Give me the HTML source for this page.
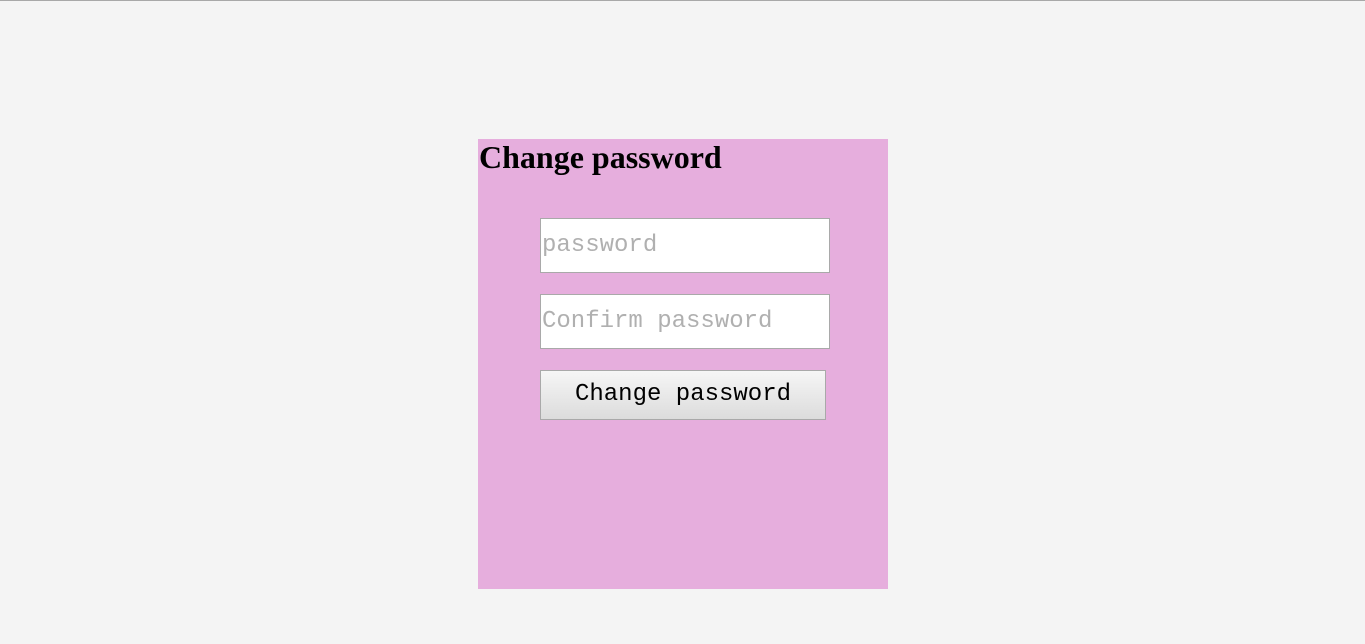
<!DOCTYPE html>
<html><head><style>
html,body{margin:0;padding:0;background:#f4f4f4;width:1365px;height:644px;overflow:hidden;}
.top{position:absolute;left:0;top:0;width:1365px;height:1px;background:#a8a8a8;}
.box{position:absolute;left:478px;top:139px;width:410px;height:450px;background:#e6aedd;}
h2{position:absolute;left:1px;top:-1px;margin:0;font:bold 32px "Liberation Serif",serif;color:#000;line-height:38px;}
.in{position:absolute;left:62px;background:#fff;border:1px solid #a9a9a9;font:24px "Liberation Mono",monospace;color:#b0b0b0;line-height:53px;padding-left:1px;box-sizing:border-box;width:290px;height:55px;}
.btn{position:absolute;left:62px;top:231px;width:286px;height:50px;box-sizing:border-box;border:1px solid #a9a9a9;background:linear-gradient(#f6f6f6,#dcdcdc);font:24px "Liberation Mono",monospace;color:#000;text-align:center;line-height:48px;}
</style></head><body>
<div class="top"></div>
<div class="box">
<h2>Change password</h2>
<div class="in" style="top:79px">password</div>
<div class="in" style="top:155px">Confirm password</div>
<div class="btn">Change password</div>
</div>
</body></html>
